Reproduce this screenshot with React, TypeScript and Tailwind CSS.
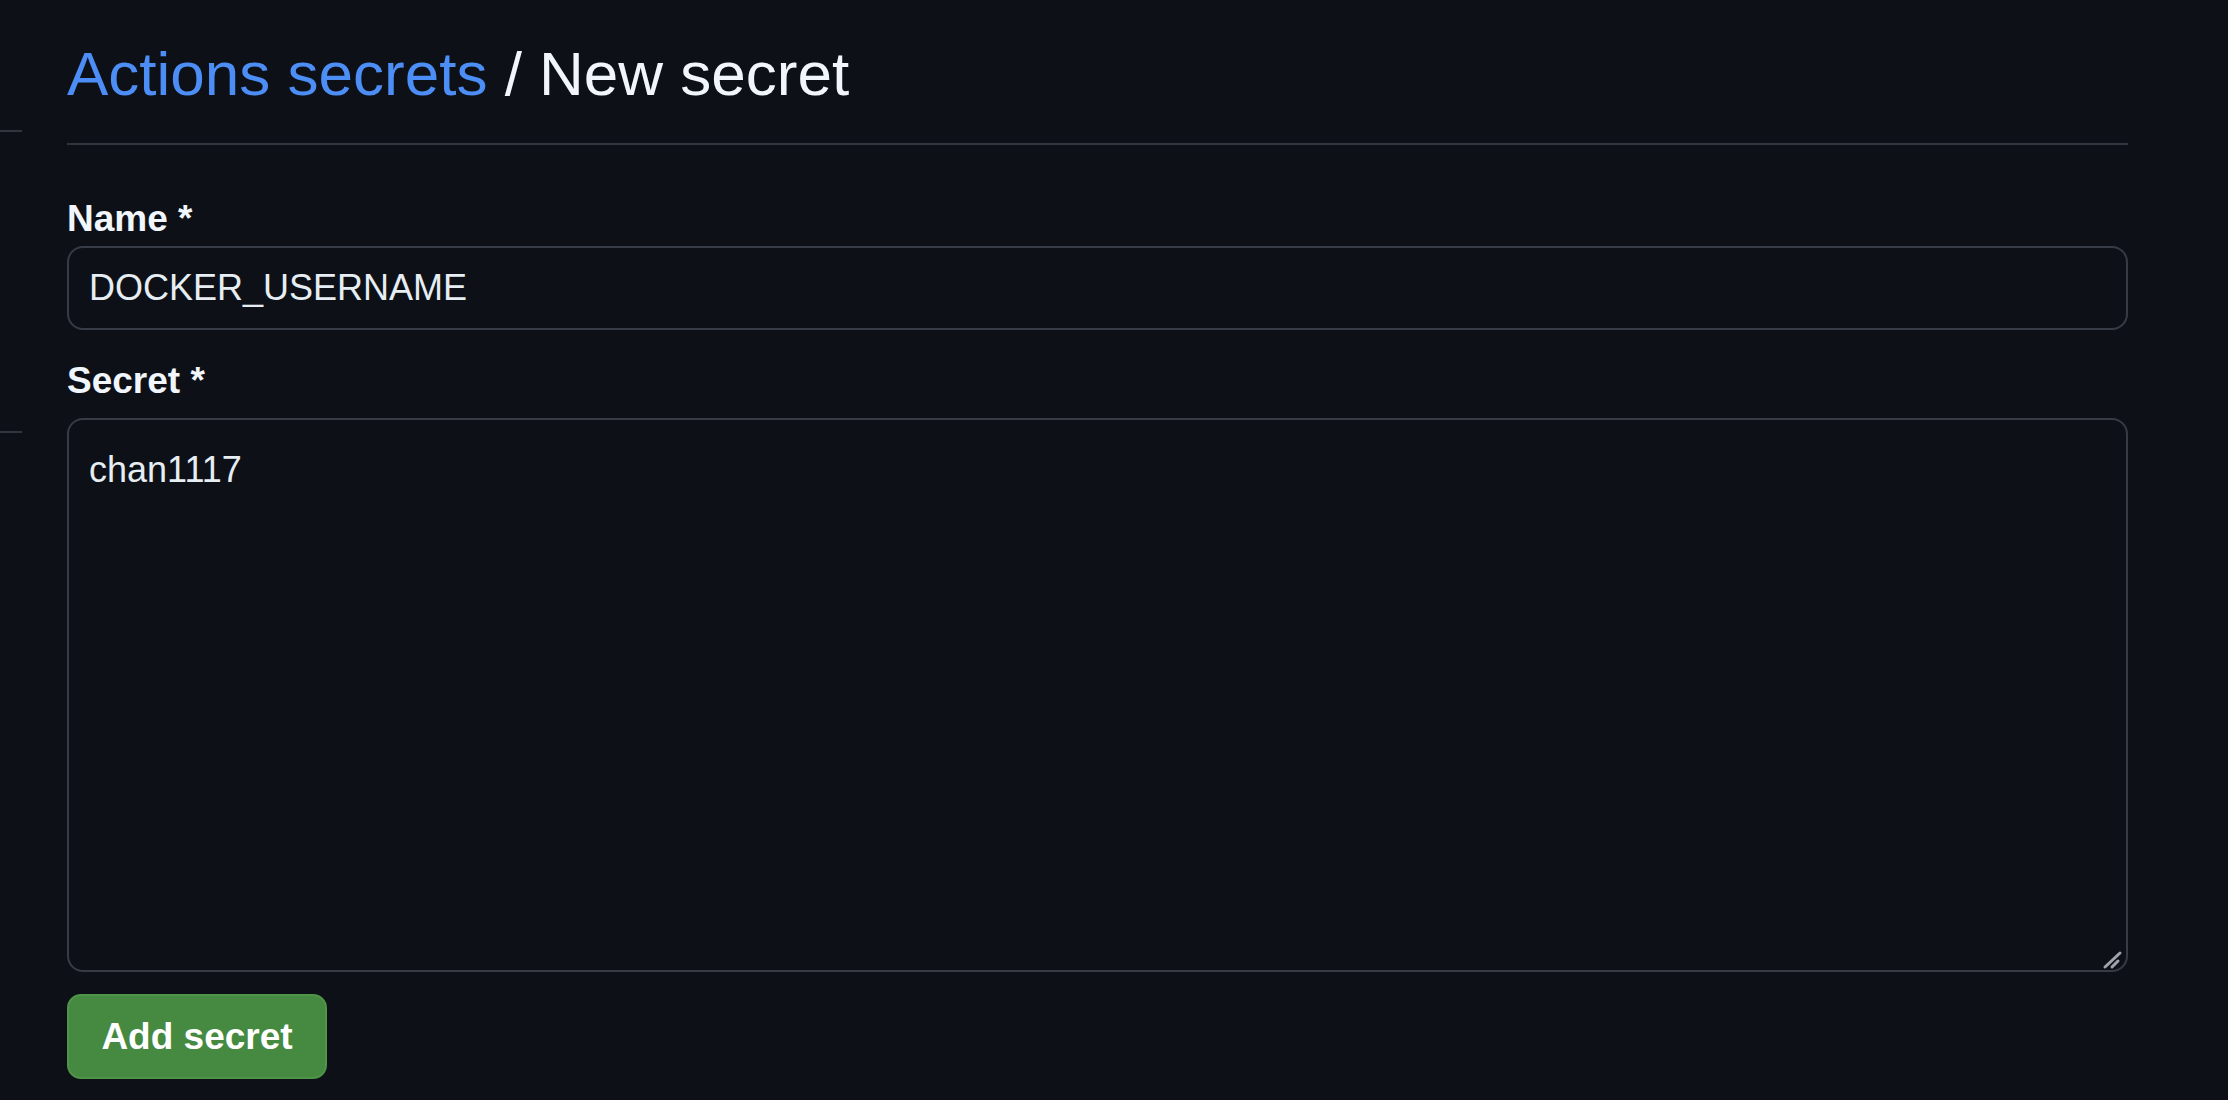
import { useState } from "react";

const font = "font-['Liberation_Sans','Helvetica',Arial,sans-serif]";

function SideEdge() {
  // left settings nav, cut off at the screen edge: only its separators show
  return (
    <div className="w-[22px] shrink-0">
      <div className="mt-[130px] h-[2px] bg-[#30363d]" />
      <div className="mt-[299px] h-[2px] bg-[#30363d]" />
    </div>
  );
}

function ResizeGrip() {
  return (
    <svg
      className="pointer-events-none absolute bottom-[2px] right-[2px]"
      width="24"
      height="22"
      viewBox="0 0 24 22"
      fill="none"
    >
      <path d="M3 19 L18 5" stroke="#a0a4aa" strokeWidth="3" strokeLinecap="round" />
      <path d="M10 19 L16 13" stroke="#a0a4aa" strokeWidth="3" strokeLinecap="round" />
    </svg>
  );
}

export default function App() {
  const [name, setName] = useState("DOCKER_USERNAME");
  const [secret, setSecret] = useState("chan1117");

  return (
    <div className={`flex min-h-screen w-full bg-[#0d1117] ${font}`}>
      <SideEdge />

      <main className="ml-[45px] w-[2061px] shrink-0">
        {/* Subhead */}
        <div className="pt-[36px] pb-[31px] border-b-2 border-[#30363d]">
          <h1 className="text-[62px] leading-[76px] font-normal text-[#f0f6fc]">
            <a href="#" className="text-[#4c8ef5]">
              Actions secrets
            </a>{" "}
            / New secret
          </h1>
        </div>

        <form className="flex flex-col" onSubmit={(e) => e.preventDefault()}>
          <label className="mt-[51px] text-[37px] leading-[46px] font-bold text-[#f0f6fc]">
            Name *
          </label>
          <input
            value={name}
            onChange={(e) => setName(e.target.value)}
            className="mt-[4px] h-[84px] w-full rounded-[16px] border-2 border-[#363c45] bg-[#0d1117] pl-[20px] text-[36px] text-[#e6edf3] outline-none"
          />

          <label className="mt-[28px] text-[37px] leading-[46px] font-bold text-[#f0f6fc]">
            Secret *
          </label>
          <div className="relative mt-[14px]">
            <textarea
              value={secret}
              onChange={(e) => setSecret(e.target.value)}
              className="block h-[554px] w-full resize-none rounded-[16px] border-2 border-[#363c45] bg-[#0d1117] pl-[20px] pt-[23px] text-[36px] leading-[54px] text-[#e6edf3] outline-none"
            />
            <ResizeGrip />
          </div>

          <div className="mt-[22px]">
            <button
              type="submit"
              className="h-[85px] w-[260px] rounded-[14px] border-2 border-[#4e9449] bg-[#458a40] text-[37px] font-bold text-white"
            >
              Add secret
            </button>
          </div>
        </form>
      </main>
    </div>
  );
}
